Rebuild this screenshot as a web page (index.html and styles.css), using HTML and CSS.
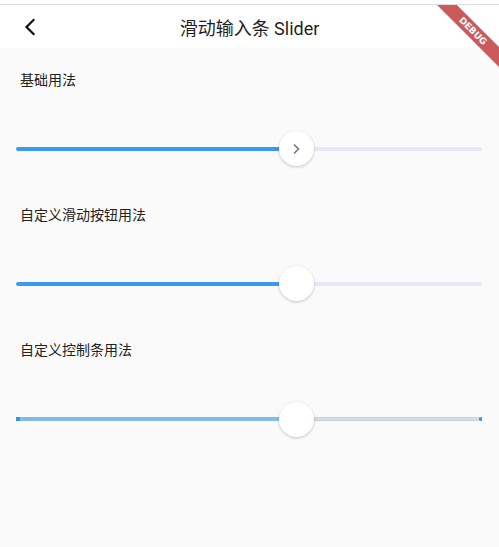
FILE: index.html
```html
<!DOCTYPE html>
<html lang="zh">
<head>
<meta charset="utf-8">
<title>Slider</title>
<link rel="stylesheet" href="styles.css">
</head>
<body>
<div class="topstrip"></div>
<header class="appbar">
  <button class="back" aria-label="back">
    <svg width="24" height="24" viewBox="0 0 24 24"><polyline points="15.5,5 8.5,12 15.5,19" fill="none" stroke="#111" stroke-width="2.2" stroke-linecap="square" stroke-linejoin="miter"/></svg>
  </button>
  <h1 class="title">滑动输入条 Slider</h1>
</header>
<div class="banner-clip"><div class="banner">DEBUG</div></div>
<main class="content">
  <section class="section">
    <div class="label">基础用法</div>
    <div class="slider">
      <div class="track-active" style="width:60%"></div>
      <div class="track-inactive"></div>
      <div class="thumb" style="left:60%">
        <svg width="14" height="14" viewBox="0 0 14 14"><polyline points="5,2.5 9.5,7 5,11.5" fill="none" stroke="#7a7a7a" stroke-width="1.7"/></svg>
      </div>
    </div>
  </section>
  <section class="section">
    <div class="label">自定义滑动按钮用法</div>
    <div class="slider">
      <div class="track-active" style="width:60%"></div>
      <div class="track-inactive"></div>
      <div class="thumb" style="left:60%"></div>
    </div>
  </section>
  <section class="section">
    <div class="label">自定义控制条用法</div>
    <div class="slider custom">
      <div class="track-active" style="width:60%"></div>
      <div class="track-inactive"></div>
      <div class="thumb" style="left:60%"></div>
    </div>
  </section>
</main>
</body>
</html>
```
FILE: styles.css
```css
* { box-sizing: border-box; }
html, body { margin: 0; padding: 0; }
body {
  width: 499px;
  height: 547px;
  background: #fafafa;
  font-family: Roboto, "Noto Sans CJK SC", sans-serif;
  color: #222;
  position: relative;
  overflow: hidden;
}
.topstrip {
  height: 5px;
  background: #fff;
  border-bottom: 1px solid #dcdcdc;
}
.appbar {
  height: 43px;
  background: #fff;
  display: flex;
  align-items: center;
  position: relative;
}
.back {
  border: 0;
  background: none;
  padding: 0;
  margin-left: 18px;
  width: 24px;
  height: 24px;
  display: flex;
}
.title {
  position: absolute;
  left: 0;
  right: 0;
  top: 0;
  margin: 0;
  line-height: 47px;
  text-align: center;
  font-size: 18px;
  font-weight: 400;
  color: #1f1f1f;
  pointer-events: none;
}
.banner-clip {
  position: absolute;
  top: 5px;
  right: 0;
  width: 70px;
  height: 70px;
  overflow: hidden;
}
.banner {
  position: absolute;
  left: -6px;
  top: 19px;
  width: 100px;
  height: 14px;
  line-height: 14px;
  transform: rotate(45deg);
  background: rgba(183, 28, 28, 0.72);
  color: #fff;
  font-family: "DejaVu Sans", sans-serif;
  font-weight: bold;
  font-size: 9px;
  text-align: center;
}
.content {
  padding-top: 22px;
}
.section {
  height: 135px;
}
.label {
  padding-left: 20px;
  font-size: 14px;
  line-height: 20px;
  color: #222;
}
.slider {
  margin: 39px 17px 0 16px;
  height: 40px;
  display: flex;
  align-items: center;
  position: relative;
}
.track-active {
  height: 4px;
  background: #3a9af0;
  border-radius: 2px 0 0 2px;
}
.track-inactive {
  flex: 1;
  height: 4px;
  background: #e6e8f9;
  border-radius: 0 2px 2px 0;
}
.thumb {
  position: absolute;
  top: 2px;
  width: 35px;
  height: 35px;
  margin-left: -17px;
  border-radius: 50%;
  background: #fff;
  box-shadow: 0 1px 3px rgba(0, 0, 0, 0.22);
  display: flex;
  align-items: center;
  justify-content: center;
}
.custom .track-active {
  height: 4px;
  background: #7fbcec;
  border-left: 4px solid #3194ef;
  border-radius: 0;
}
.custom .track-inactive {
  height: 4px;
  background: #d9dcdf;
  border-top: 1px solid #c3d3df;
  border-bottom: 1px solid #c3d3df;
  border-right: 3px solid #3194ef;
  border-radius: 0;
}
.custom .thumb { top: 3px; }
```
